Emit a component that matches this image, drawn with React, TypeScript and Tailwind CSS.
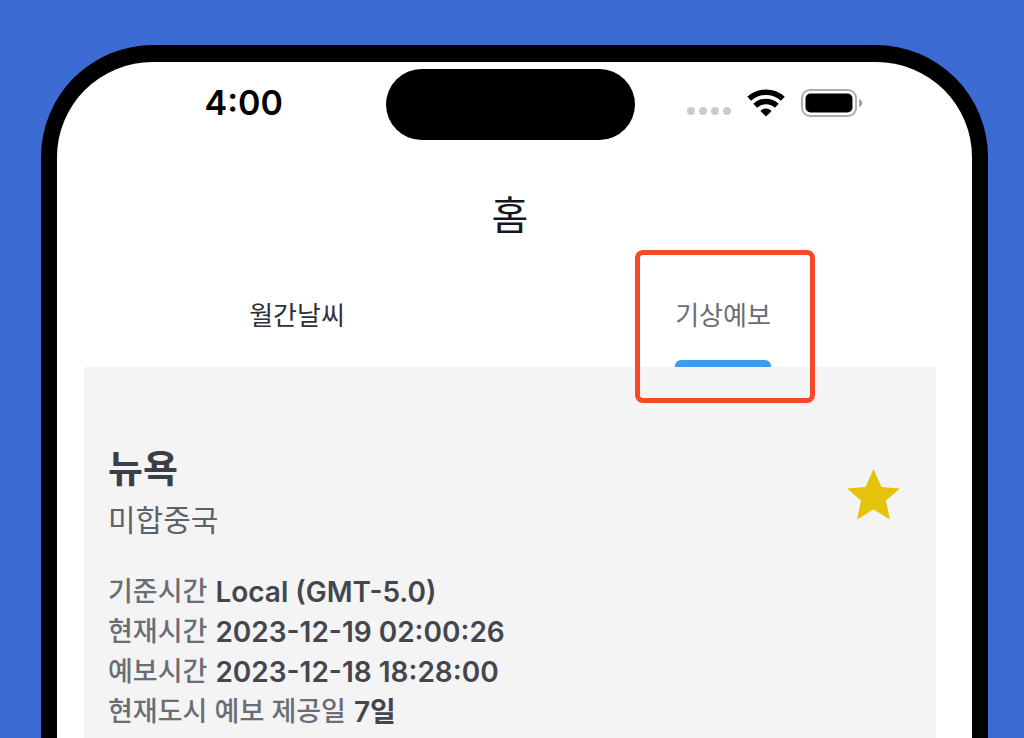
import { useState } from "react";

const tabs = ["월간날씨", "기상예보"];

const details = [
  { label: "기준시간", value: "Local (GMT-5.0)" },
  { label: "현재시간", value: "2023-12-19 02:00:26" },
  { label: "예보시간", value: "2023-12-18 18:28:00" },
  { label: "현재도시 예보 제공일", value: "7일" },
];

function WifiIcon() {
  return (
    <svg className="w-[38px] h-7" viewBox="0 0 38 28" fill="none" aria-hidden="true">
      <path d="M2.2 9.8C11.6 1 26.4 1 35.8 9.8" stroke="#000" strokeWidth="5.6" />
      <path d="M8.2 16.8C14.2 11 23.8 11 29.8 16.8" stroke="#000" strokeWidth="5.4" />
      <path d="M19 27.5L13.4 22C16.4 18.6 21.6 18.6 24.6 22Z" fill="#000" />
    </svg>
  );
}

function BatteryIcon() {
  return (
    <svg className="w-[62px] h-7" viewBox="0 0 62 28" fill="none" aria-hidden="true">
      <rect x="1" y="1" width="54" height="26" rx="8" stroke="#aeaeae" strokeWidth="2" />
      <rect x="4.5" y="4.5" width="47" height="19" rx="5" fill="#000" />
      <path d="M58 10C62.4 11.2 62.4 16.8 58 18Z" fill="#a0a0a0" />
    </svg>
  );
}

function StatusBar() {
  return (
    <div className="grid grid-cols-[1fr_249px_1fr] items-center">
      <time className="pl-[18px] pb-1 text-center text-[34px] leading-10 font-semibold text-black">4:00</time>
      <div className="h-[71px] rounded-full bg-black" />
      <div className="flex items-center justify-center gap-4 pr-5 pb-1">
        <div className="flex gap-1 pt-4">
          <span className="size-2 rounded-sm bg-[#cbcbcb]" />
          <span className="size-2 rounded-sm bg-[#cbcbcb]" />
          <span className="size-2 rounded-sm bg-[#cbcbcb]" />
          <span className="size-2 rounded-sm bg-[#cbcbcb]" />
        </div>
        <WifiIcon />
        <BatteryIcon />
      </div>
    </div>
  );
}

export default function App() {
  const [active, setActive] = useState(1);
  const [starred, setStarred] = useState(true);

  return (
    <div className="min-h-screen flex flex-col bg-[#3c6cd3] pt-[45px] pl-[41px] pr-9 font-['Inter','Noto_Sans_CJK_KR',sans-serif]">
      {/* Phone frame */}
      <div className="flex-1 flex flex-col rounded-t-[112px] border-x-[16px] border-t-[17px] border-black bg-white pt-[7px] pl-[27px] pr-9">
        <StatusBar />

        <h1 className="pt-[46px] text-center text-[40px] leading-[60px] font-normal text-[#15171c]">홈</h1>

        {/* Tabs */}
        <div role="tablist" className="grid grid-cols-2 pt-[50px]">
          {tabs.map((tab, i) => (
            <button
              key={tab}
              role="tab"
              aria-selected={active === i}
              onClick={() => setActive(i)}
              className="flex justify-center text-[26px] leading-10"
            >
              <span className="relative flex flex-col gap-6">
                <span className={active === i ? "text-[#6b6d74]" : "text-[#2e3037]"}>{tab}</span>
                <span className={active === i ? "h-[7px] rounded-t-md bg-[#3b9cf1]" : "h-[7px]"} />
                {active === i && (
                  <span className="absolute -left-10 -right-11 -top-[46px] -bottom-9 rounded-lg border-[5px] border-[#f54927] pointer-events-none" />
                )}
              </span>
            </button>
          ))}
        </div>

        {/* Forecast */}
        <main className="flex-1 bg-[#f4f4f4] pl-6 pr-9 pt-[77px]">
          <div className="flex items-center justify-between">
            <div className="flex flex-col gap-1">
              <h2 className="text-[38px] leading-12 font-bold text-[#3c3e46]">뉴욕</h2>
              <p className="text-[30px] leading-12 text-[#5f6168]">미합중국</p>
            </div>
            <button aria-label="즐겨찾기" aria-pressed={starred} onClick={() => setStarred(!starred)}>
              <svg className="w-[53px] h-[51px]" viewBox="0 0 53 51" aria-hidden="true">
                <path
                  d="M26.5 0L34.5 18L53 19.5L39 31.5L43 50.5L26.5 40.5L10 50.5L14 31.5L0 19.5L18.5 18Z"
                  fill={starred ? "#e5c30d" : "#c4c4c4"}
                />
              </svg>
            </button>
          </div>

          <dl className="pt-7 leading-10">
            {details.map((item) => (
              <div key={item.label} className="flex gap-2">
                <dt className="text-[27px] font-medium text-[#6b6d74]">{item.label}</dt>
                <dd className="text-[28px] font-semibold text-[#44464e]">{item.value}</dd>
              </div>
            ))}
          </dl>
        </main>
      </div>
    </div>
  );
}
